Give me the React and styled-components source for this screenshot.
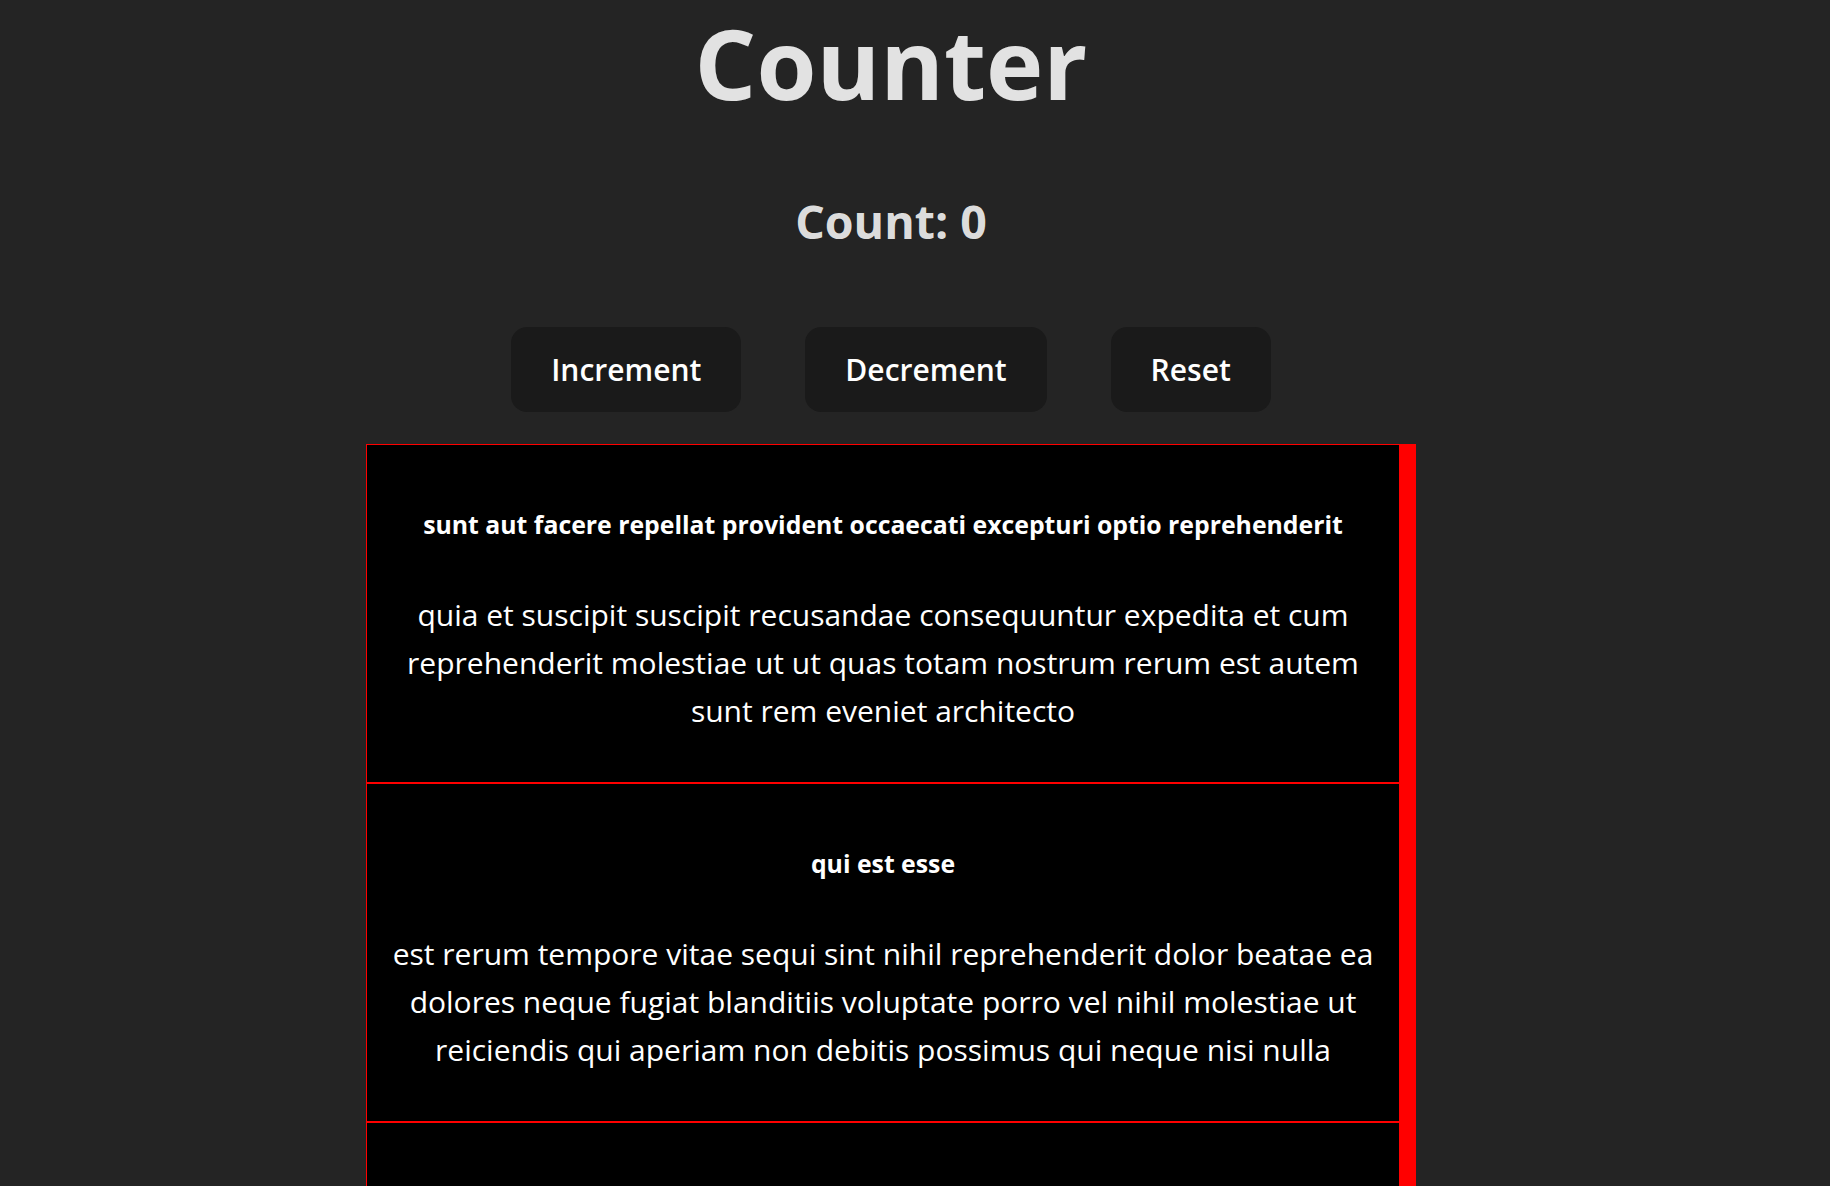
import React, { useState } from "react";
import styled, { createGlobalStyle } from "styled-components";

const posts = [
    {
        id: 1,
        title: "sunt aut facere repellat provident occaecati excepturi optio reprehenderit",
        body: "quia et suscipit\nsuscipit recusandae consequuntur expedita et cum\nreprehenderit molestiae ut ut quas totam\nnostrum rerum est autem sunt rem eveniet architecto",
    },
    {
        id: 2,
        title: "qui est esse",
        body: "est rerum tempore vitae\nsequi sint nihil reprehenderit dolor beatae ea dolores neque\nfugiat blanditiis voluptate porro vel nihil molestiae ut reiciendis\nqui aperiam non debitis possimus qui neque nisi nulla",
    },
    {
        id: 3,
        title: "ea molestias quasi exercitationem repellat qui ipsa sit aut",
        body: "et iusto sed quo iure\nvoluptatem occaecati omnis eligendi aut ad\nvoluptatem doloribus vel accusantium quis pariatur\nmolestiae porro eius odio et labore et velit aut",
    },
    {
        id: 4,
        title: "eum et est occaecati",
        body: "ullam et saepe reiciendis voluptatem adipisci\nsit amet autem assumenda provident rerum culpa\nquis hic commodi nesciunt rem tenetur doloremque ipsam iure\nquis sunt voluptatem rerum illo velit",
    },
];

const GlobalStyle = createGlobalStyle`
    html, body {
        margin: 0;
        padding: 0;
        background: #242424;
        color: rgba(255, 255, 255, 0.87);
        font-family: "Open Sans", "Noto Sans", sans-serif;
        overflow: hidden;
    }
`;

const Page = styled.div`
    display: flex;
    flex-direction: column;
    align-items: center;
    padding: 2px 48px 0 0;
    text-align: center;
`;

const Title = styled.h1`
    margin: 0;
    font-size: 97px;
    line-height: 120px;
    font-weight: 700;
`;

const CountText = styled.h2`
    margin: 68px 0 0;
    font-size: 46.5px;
    line-height: 62px;
    font-weight: 700;
`;

const ButtonRow = styled.div`
    display: flex;
    gap: 64px;
    margin-top: 75px;
`;

const Button = styled.button`
    height: 85px;
    padding: 0 38px;
    border: 2px solid transparent;
    border-radius: 16px;
    background: #1a1a1a;
    color: #fff;
    font-family: inherit;
    font-size: 30px;
    font-weight: 600;
    cursor: pointer;
`;

/* the red right edge stands in for the list's red scrollbar */
const PostList = styled.div`
    margin-top: 32px;
    width: 1050px;
    height: 800px;
    box-sizing: border-box;
    border: 1px solid red;
    border-right-width: 17px;
    background: #000;
    overflow: hidden;
`;

const PostItem = styled.div`
    padding: 59px 16px 47px;
    border-bottom: 2px solid red;
    color: #fff;
`;

const PostTitle = styled.h5`
    margin: 0;
    font-size: 24.8px;
    line-height: 40px;
    font-weight: 700;
`;

const PostBody = styled.p`
    margin: 47px 0 0;
    font-size: 30px;
    line-height: 48px;
`;

const App = () => {
    const [count, setCount] = useState(0);

    return (
        <>
            <GlobalStyle />
            <Page>
                <Title>Counter</Title>
                <CountText>Count: {count}</CountText>
                <ButtonRow>
                    <Button onClick={() => setCount(count + 1)}>Increment</Button>
                    <Button onClick={() => setCount(count - 1)}>Decrement</Button>
                    <Button onClick={() => setCount(0)}>Reset</Button>
                </ButtonRow>
                <PostList>
                    {posts.map((post) => (
                        <PostItem key={post.id}>
                            <PostTitle>{post.title}</PostTitle>
                            <PostBody>{post.body}</PostBody>
                        </PostItem>
                    ))}
                </PostList>
            </Page>
        </>
    );
};

export default App;
